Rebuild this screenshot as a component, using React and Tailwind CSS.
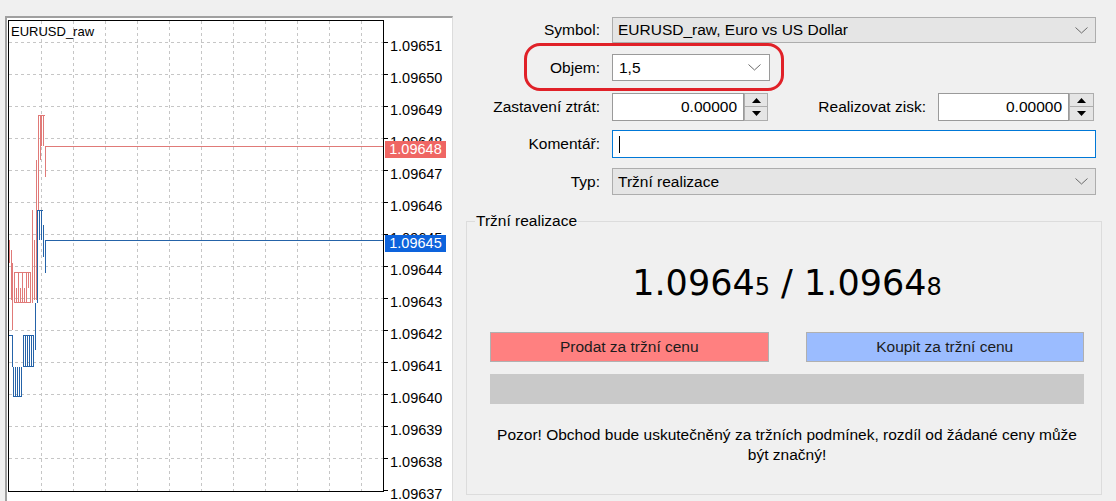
import React from "react";

const axisLabels = [
  "1.09651", "1.09650", "1.09649", "1.09648", "1.09647", "1.09646", "1.09645", "1.09644",
  "1.09643", "1.09642", "1.09641", "1.09640", "1.09639", "1.09638", "1.09637",
];

// tick history, [x, yFrom, yTo] in page pixels
const askTicks = [
  [9, 240, 263], [11, 250, 300], [12, 263, 330], [14, 272, 303], [16, 288, 303],
  [18, 272, 303], [20, 288, 303], [22, 272, 303], [24, 288, 303], [26, 272, 303],
  [28, 272, 288], [30, 272, 303], [32, 210, 303], [34, 240, 300], [36, 160, 300],
  [38, 115, 210], [40, 115, 160], [41, 115, 146], [43, 115, 146], [45, 146, 177],
];
const askSteps = "M14 272.5H31M14 302.5H31M38 115.5H45";

const bidTicks = [
  [12, 335, 367], [13, 367, 397], [15, 367, 397], [17, 367, 397], [19, 367, 397],
  [21, 367, 397], [23, 335, 367], [25, 335, 367], [27, 335, 367], [29, 335, 367],
  [31, 335, 367], [33, 335, 367], [35, 303, 350], [37, 210, 303], [39, 210, 240],
  [41, 210, 240], [43, 225, 257], [45, 240, 273],
];
const bidSteps = "M13 396.5H22M23 335.5H34M23 366.5H34M37 210.5H43";

const toPath = (ticks) =>
  ticks.map(([x, a, b]) => `M${x - 9 + 0.5} ${a - 21}V${b - 21}`).join("");

const Chevron = () => (
  <svg width="13" height="7" viewBox="0 0 13 7">
    <path d="M0.5 0.5 L6.5 6 L12.5 0.5" fill="none" stroke="#6a6a6a" strokeWidth="1" />
  </svg>
);

const Spinner = ({ w }) => (
  <div className={`flex h-[28px] flex-col ${w}`}>
    <div className="flex h-[14px] items-center justify-center border border-[#adadad] bg-[#e5e5e5]">
      <svg width="9" height="5" viewBox="0 0 9 5">
        <path d="M0 5 L4.5 0 L9 5 Z" fill="#000" />
      </svg>
    </div>
    <div className="flex h-[14px] items-center justify-center border border-t-0 border-[#adadad] bg-[#e5e5e5]">
      <svg width="9" height="5" viewBox="0 0 9 5">
        <path d="M0 0 L9 0 L4.5 5 Z" fill="#000" />
      </svg>
    </div>
  </div>
);

const Chart = () => (
  <div className="relative ml-[5px] mt-[16px] flex h-[490px] w-[448px] border-l-2 border-t-2 border-r border-[#a0a0a0] border-r-[#dcdcdc] bg-white">
    <div className="ml-[1px] mt-[2px] h-[472px] w-[376px] shrink-0 border border-black">
      <svg width="374" height="470" className="block">
        <g stroke="#c6c6c6" strokeWidth="1" strokeDasharray="3 3">
          {Array.from({ length: 11 }, (_, k) => (
            <line key={"v" + k} x1={32.5 + 32 * k} y1="0" x2={32.5 + 32 * k} y2="470" />
          ))}
          {Array.from({ length: 14 }, (_, k) => (
            <line key={"h" + k} x1="0" y1={21.5 + 32 * k} x2="374" y2={21.5 + 32 * k} />
          ))}
        </g>
        <g transform="translate(-9 -21)" fill="none" strokeWidth="1">
          <path d={askSteps} stroke="#e07a78" />
          <path d={bidSteps} stroke="#2563a8" />
        </g>
        <path d={toPath(askTicks)} stroke="#e07a78" strokeWidth="1" fill="none" />
        <path d="M36 125.5H374" stroke="#e07a78" strokeWidth="1" fill="none" />
        <path d={toPath(bidTicks)} stroke="#2563a8" strokeWidth="1" fill="none" />
        <path d="M0 314.5H3.5M36 219.5H374" stroke="#2563a8" strokeWidth="1" fill="none" />
        <text x="2" y="15" fontSize="13" fontFamily="Liberation Sans, Arial, sans-serif" fill="#000">
          EURUSD_raw
        </text>
      </svg>
    </div>

    <div className="flex flex-1 flex-col pt-[12px]">
      {axisLabels.map((label) => (
        <div key={label} className="relative h-[32px] shrink-0 pl-[6px] text-[14.5px] leading-[32px] text-black">
          <span className="absolute left-0 top-[12px] h-px w-[4px] bg-black" />
          {label}
        </div>
      ))}
    </div>

    <div className="absolute left-[378px] top-[123px] h-[17px] w-[61px] bg-[#ef6663] text-center text-[14.5px] leading-[17px] text-white">
      1.09648
    </div>
    <div className="absolute left-[378px] top-[217px] h-[17px] w-[61px] bg-[#0d63dc] text-center text-[14.5px] leading-[17px] text-white">
      1.09645
    </div>
  </div>
);

const App = () => {
  return (
    <div className="flex h-[501px] w-[1116px] items-start overflow-hidden bg-[#f0f0f0] font-['Liberation_Sans',Arial,sans-serif] text-black">
      <Chart />

      <div className="relative ml-[13px] flex w-[636px] flex-col text-[15.5px]">
        {/* Symbol */}
        <div className="mt-[17px] flex h-[26px] items-center pr-[6px]">
          <div className="w-[134px] text-right">Symbol:</div>
          <div className="ml-[12px] flex h-full flex-1 items-center justify-between border border-[#adadad] bg-[#e5e5e5] pl-[5px] pr-[7px]">
            <span>EURUSD_raw, Euro vs US Dollar</span>
            <Chevron />
          </div>
        </div>

        {/* Objem */}
        <div className="mt-[11px] flex h-[27px] items-center">
          <div className="w-[134px] text-right">Objem:</div>
          <div className="ml-[12px] flex h-full w-[158px] items-center justify-between border border-[#9a9a9a] bg-white pl-[6px] pr-[8px]">
            <span>1,5</span>
            <Chevron />
          </div>
        </div>

        {/* Stop loss / take profit */}
        <div className="mt-[12px] flex h-[28px] items-center pr-[6px]">
          <div className="w-[134px] whitespace-nowrap text-right">Zastavení ztrát:</div>
          <div className="ml-[12px] flex">
            <div className="flex h-[28px] w-[132px] items-center justify-end border border-[#9a9a9a] bg-white pr-[6px]">
              0.00000
            </div>
            <Spinner w="w-[24px]" />
          </div>
          <div className="flex-1 whitespace-nowrap pr-[12px] text-right">Realizovat zisk:</div>
          <div className="mr-[2px] flex">
            <div className="flex h-[28px] w-[131px] items-center justify-end border border-[#9a9a9a] bg-white pr-[6px]">
              0.00000
            </div>
            <Spinner w="w-[25px]" />
          </div>
        </div>

        {/* Komentar */}
        <div className="mt-[9px] flex h-[28px] items-center pr-[6px]">
          <div className="w-[134px] text-right">Komentář:</div>
          <div className="ml-[12px] flex h-full flex-1 items-center border border-[#0078d7] bg-white pl-[6px]">
            <div className="h-[17px] w-px bg-black" />
          </div>
        </div>

        {/* Typ */}
        <div className="mt-[10px] flex h-[27px] items-center pr-[6px]">
          <div className="w-[134px] text-right">Typ:</div>
          <div className="ml-[12px] flex h-full flex-1 items-center justify-between border border-[#adadad] bg-[#e5e5e5] pl-[5px] pr-[7px]">
            <span>Tržní realizace</span>
            <Chevron />
          </div>
        </div>

        {/* Market execution group */}
        <div className="relative mt-[26px] flex h-[274px] flex-col border border-[#dcdcdc] pl-[23px] pr-[17px] pt-[41px]">
          <div className="absolute left-[8px] top-[-11px] bg-[#f0f0f0] px-[1px] leading-[20px]">
            Tržní realizace
          </div>

          <div className="h-[40px] text-center font-['DejaVu_Sans',Verdana,sans-serif] text-[35px] leading-[40px]">
            1.0964<span className="text-[24px]">5</span> / 1.0964<span className="text-[24px]">8</span>
          </div>

          <div className="mt-[29px] grid grid-cols-2 gap-x-[37px]">
            <button className="h-[30px] border border-[#b0b0b0] bg-[#ff8080] text-[#1c1c1c]">
              Prodat za tržní cenu
            </button>
            <button className="h-[30px] border border-[#b0b0b0] bg-[#9bbcff] text-[#1c1c1c]">
              Koupit za tržní cenu
            </button>
          </div>

          <div className="mt-[12px] h-[30px] bg-[#c9c9c9]" />

          <div className="mt-[21px] text-center leading-[20px]">
            <div className="whitespace-nowrap">
              Pozor! Obchod bude uskutečněný za tržních podmínek, rozdíl od žádané ceny může
            </div>
            <div>být značný!</div>
          </div>
        </div>

        {/* highlight drawn over the volume field */}
        <div className="pointer-events-none absolute left-[58px] top-[43px] h-[48px] w-[260px] rounded-[16px] border-[3px] border-[#e02128]" />
      </div>
    </div>
  );
};

export default App;
